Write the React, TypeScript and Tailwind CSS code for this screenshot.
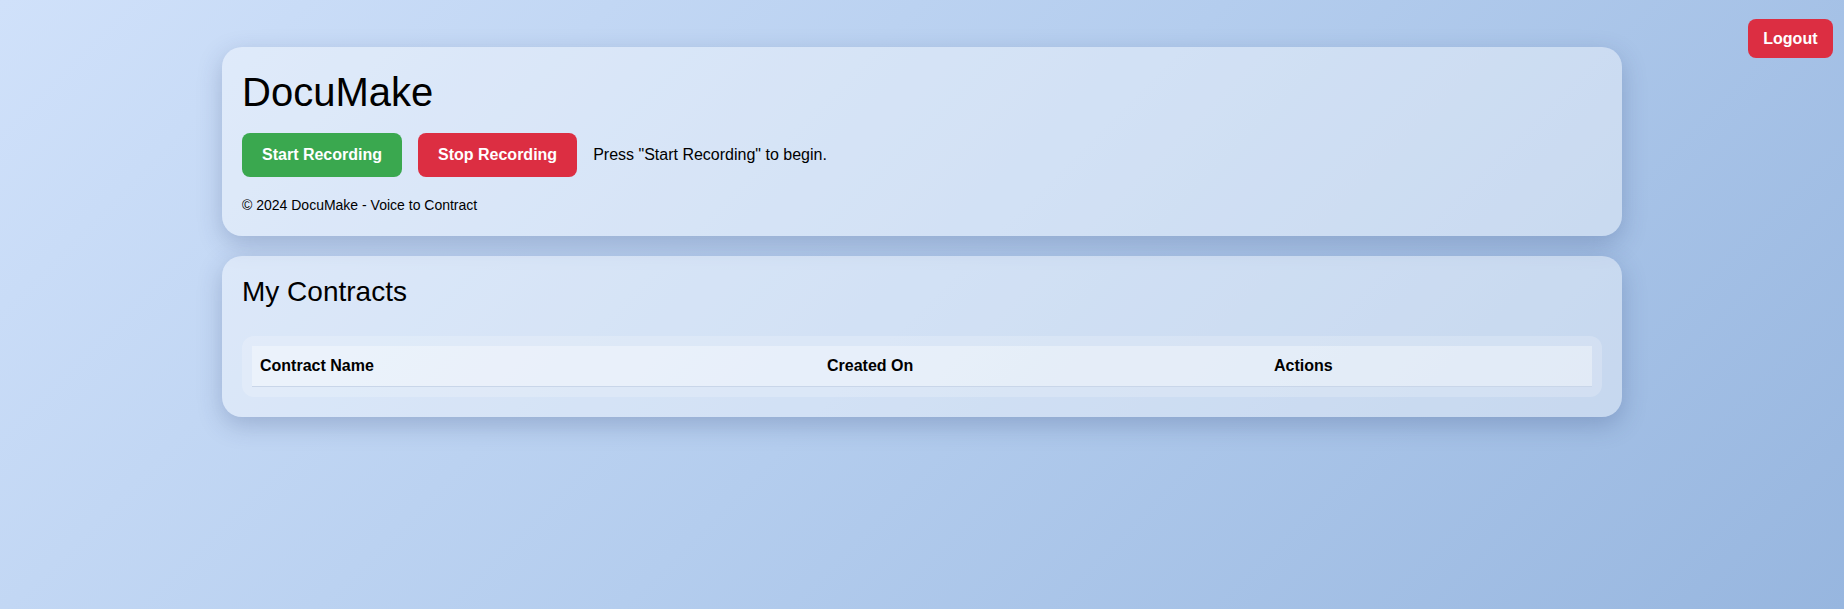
import React from "react";

export default function App() {
  return (
    <div
      className="relative min-h-[609px] w-full bg-[linear-gradient(135deg,#d0e1fa_0%,#b4cdee_50%,#97b6df_100%)] text-black"
      style={{ fontFamily: '"Liberation Sans", Arial, Helvetica, sans-serif' }}
    >
      <button className="absolute right-[11px] top-[19px] h-[39px] rounded-lg bg-[#dc2e42] px-[15.5px] text-[16px] font-bold text-white">
        Logout
      </button>

      <div className="mx-auto w-[1400px] pt-[47px]">
        <section className="rounded-[20px] bg-white/40 px-5 pb-[21px] pt-5 shadow-[0_8px_24px_rgba(40,60,110,0.25)]">
          <h1 className="mt-[1.5px] text-[40px] font-normal leading-[46px]">DocuMake</h1>
          <div className="mt-[18.5px] flex items-center gap-4">
            <button className="h-[44px] rounded-lg bg-[#3aa84f] px-5 text-[16px] font-bold text-white">
              Start Recording
            </button>
            <button className="h-[44px] rounded-lg bg-[#dc2e42] px-5 text-[16px] font-bold text-white">
              Stop Recording
            </button>
            <p className="text-[16px]">Press "Start Recording" to begin.</p>
          </div>
          <p className="mt-[18px] text-[14px] leading-5">© 2024 DocuMake - Voice to Contract</p>
        </section>

        <section className="mt-5 rounded-[20px] bg-white/40 px-5 pb-5 pt-5 shadow-[0_8px_24px_rgba(40,60,110,0.25)]">
          <h2 className="text-[28px] font-normal leading-[32px]">My Contracts</h2>
          <div className="mt-[28px] rounded-[12px] bg-white/20 p-[10px]">
            <table className="w-full table-fixed border-collapse">
              <colgroup>
                <col className="w-[567px]" />
                <col className="w-[447px]" />
                <col />
              </colgroup>
              <thead>
                <tr className="h-[40px] border-b border-[#c9d6e9] bg-white/35">
                  <th className="px-2 text-left text-[16px] font-bold">Contract Name</th>
                  <th className="px-2 text-left text-[16px] font-bold">Created On</th>
                  <th className="px-2 text-left text-[16px] font-bold">Actions</th>
                </tr>
              </thead>
              <tbody></tbody>
            </table>
          </div>
        </section>
      </div>
    </div>
  );
}
